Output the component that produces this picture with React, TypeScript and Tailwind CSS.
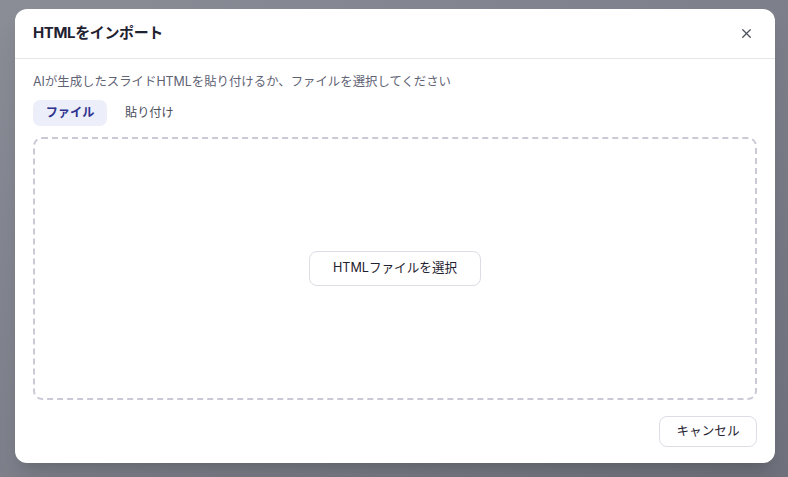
import { X } from 'lucide-react'

export default function App() {
  return (
    <main
      className="w-[788px] h-[477px] bg-gradient-to-br from-[#8a8d96] via-[#7d808a] to-[#6f727c] p-[9px_13px_14px_15px]"
      style={{ fontFamily: '"Inter", "Noto Sans CJK JP", sans-serif' }}
    >
      <div className="w-[760px] h-[454px] bg-white rounded-[12px] shadow-xl flex flex-col">
        <div className="h-[50px] flex items-center justify-between px-[18px] border-b border-[#e5e6ea]">
          <h1 className="text-[15px] font-bold text-[#1f2230] tracking-tight">HTMLをインポート</h1>
          <button className="w-[24px] h-[24px] flex items-center justify-center text-[#4b4f5c] mr-[-1px]">
            <X size={15} strokeWidth={2} />
          </button>
        </div>

        <div className="flex-1 flex flex-col px-[18px] pt-[13px] pb-[16px]">
          <p className="text-[12.4px] leading-[20px] text-[#5f6374]">
            AIが生成したスライドHTMLを貼り付けるか、ファイルを選択してください
          </p>

          <div className="flex gap-[4px] mt-[8px]">
            <button className="h-[26px] w-[74px] rounded-[7px] bg-[#eceef9] text-[12.2px] font-bold text-[#2f338f]">
              ファイル
            </button>
            <button className="h-[26px] px-[14px] rounded-[7px] text-[12.2px] text-[#4a4d5a]">
              貼り付け
            </button>
          </div>

          <div className="mt-[11px] h-[263px] border-2 border-dashed border-[#c9cad6] rounded-[9px] flex items-center justify-center">
            <button className="h-[35px] w-[172px] rounded-[8px] border border-[#dcdde5] bg-white text-[12.6px] text-[#1f2230]">
              HTMLファイルを選択
            </button>
          </div>

          <div className="flex justify-end mt-[16px]">
            <button className="h-[31px] w-[98px] rounded-[8px] border border-[#dcdde5] bg-white text-[12.6px] text-[#1f2230]">
              キャンセル
            </button>
          </div>
        </div>
      </div>
    </main>
  )
}
